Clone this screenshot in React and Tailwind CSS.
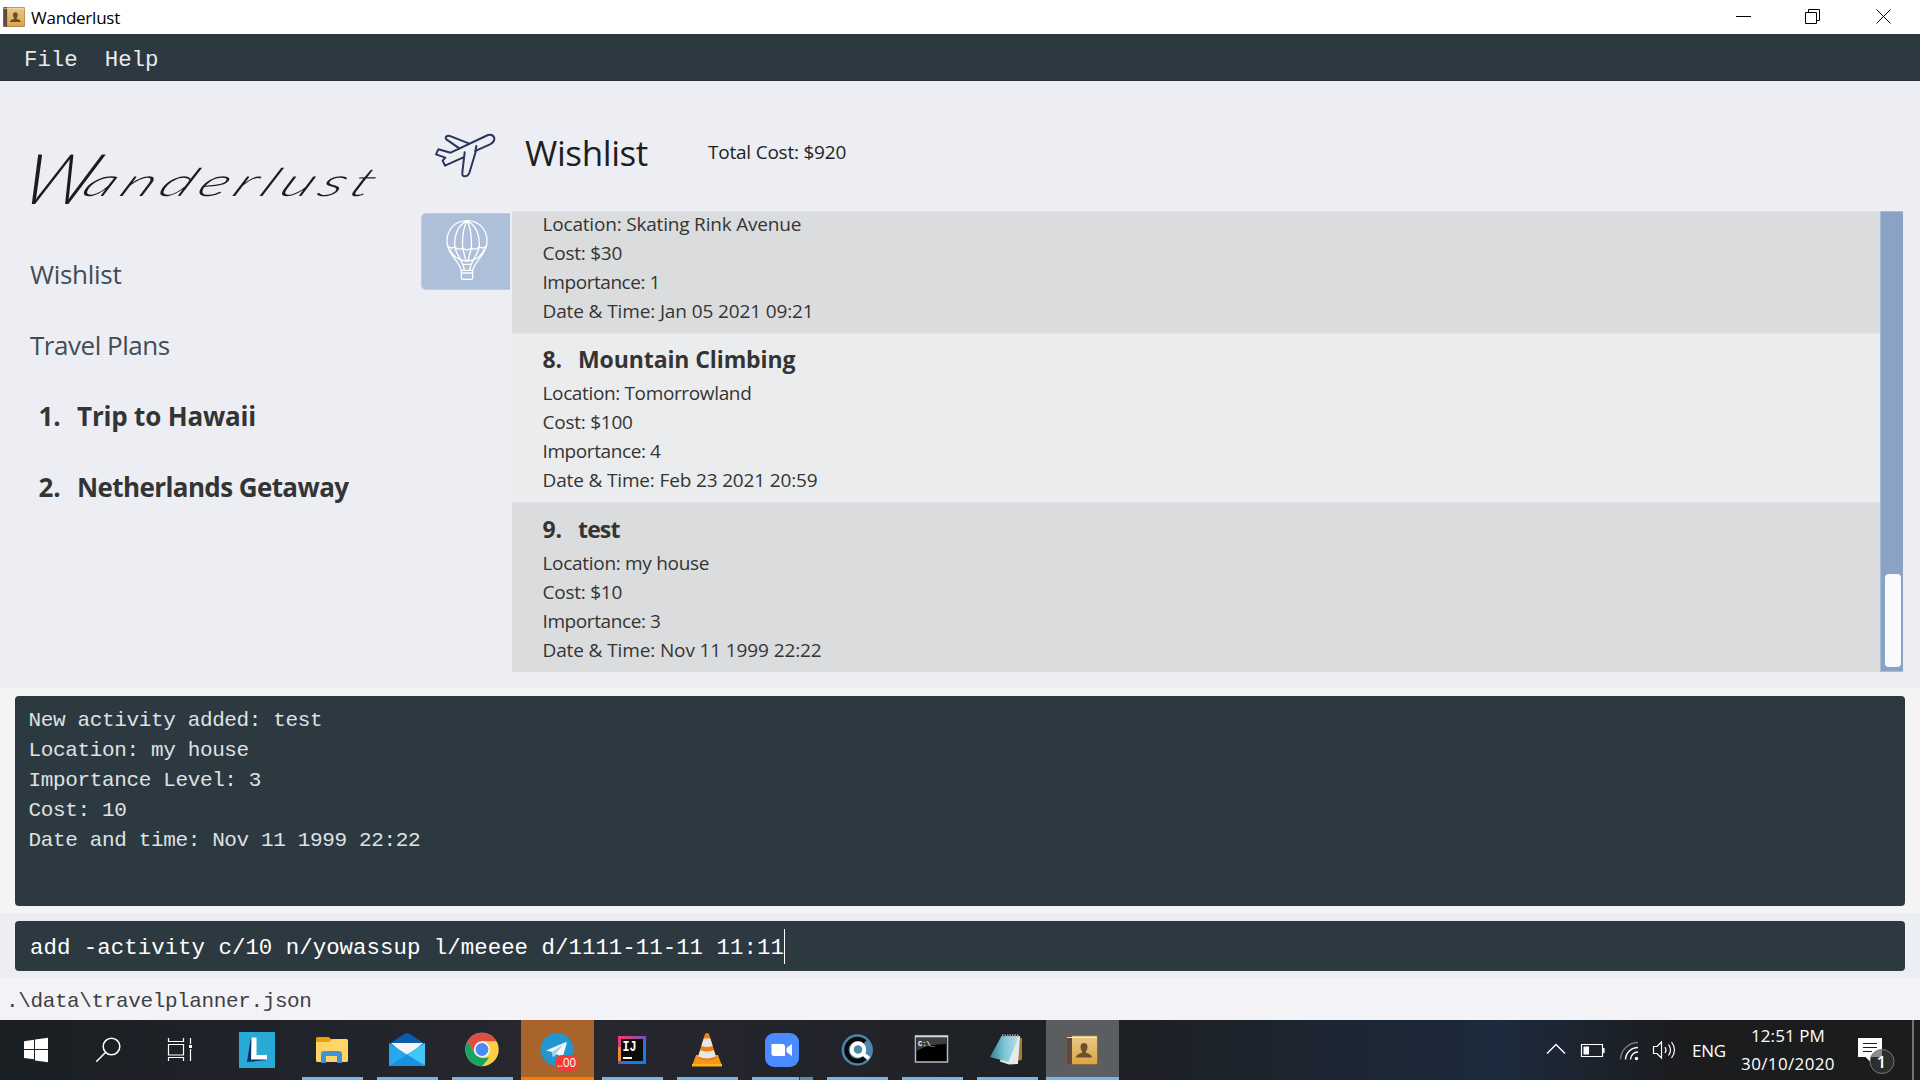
import React from "react";

const sans = "font-['Open_Sans',sans-serif]";
const mono = "font-['Liberation_Mono',monospace]";

function Book({ x, y, w, h }) {
  return (
    <svg x={x} y={y} width={w} height={h} viewBox="0 0 32 30" preserveAspectRatio="none">
      <defs>
        <linearGradient id="cover" x1="0" y1="0" x2="0" y2="1">
          <stop offset="0" stopColor="#e9c98c" />
          <stop offset="1" stopColor="#dba544" />
        </linearGradient>
      </defs>
      <rect x="0.5" y="0.5" width="31" height="29" rx="1.5" fill="url(#cover)" stroke="#8a6a3a" />
      <rect x="0.5" y="0.5" width="5.5" height="29" rx="1" fill="#5d4a45" />
      <path d="M1 2.5h30" stroke="#f6e3bd" strokeWidth="1" />
      <path d="M18 8c2.300 0 3.500 1.600 3.500 4 0 2-.8 3.300-1.600 4.200v1.600c2 .8 5.600 1.400 6.100 4.700H10c.5-3.300 4.100-3.900 6.100-4.700v-1.600c-.8-.9-1.600-2.200-1.600-4.200 0-2.400 1.200-4 3.500-4z" fill="#6b5130" />
    </svg>
  );
}

function TitleBar() {
  return (
    <header className="flex h-[34px] shrink-0 items-center bg-white pl-[3px] text-black">
      <svg width="22" height="22" viewBox="0 0 22 22"><Book x="0" y="1" w="22" h="20" /></svg>
      <span className={`ml-[6px] pt-[2px] text-[17px] leading-[34px] tracking-[-0.23px] ${sans}`}>Wanderlust</span>
      <svg className="mr-[29px] ml-auto" width="155" height="34" viewBox="1736 0 155 34" fill="none" stroke="#000" strokeWidth="1">
        <path d="M1736 16.500h15M1805.500 12.500h11v11h-11zM1808.500 12.500v-3h11v11h-3" />
        <path d="M1876.500 9.500l14 14M1890.500 9.500l-14 14" />
      </svg>
    </header>
  );
}

function MenuBar() {
  return (
    <nav className={`flex h-[47px] shrink-0 gap-[27px] overflow-hidden border-b border-[#27313c] bg-[#2d3941] pl-[24px] text-[22.400px] leading-[52px] text-[#e9ebec] ${mono}`}>
      <span>File</span>
      <span>Help</span>
    </nav>
  );
}

const plans = [
  { n: "1.", name: "Trip to Hawaii", cls: "tracking-[-0.18px]" },
  { n: "2.", name: "Netherlands Getaway", cls: "tracking-[-0.6px]" },
];

function Sidebar() {
  return (
    <aside className={`flex w-[421px] shrink-0 flex-col pl-[30px] text-[26px] leading-[71px] text-[#414c56] ${sans}`}>
      <h1 className="flex h-[158px] items-baseline pt-[43px] font-['Lato',sans-serif] leading-[90px] font-light text-[#1b1c1e] italic">
        <span className="relative top-[8px] -ml-[18px] w-[76px] origin-bottom-left scale-x-[1.080] -skew-x-[16deg] text-[70px]">W</span>
        <span className="origin-left scale-x-[1.580] -skew-x-[20deg] text-[39px] tracking-[4.300px]">anderlust</span>
      </h1>
      <div className="tracking-[-0.28px]">Wishlist</div>
      <div className="tracking-[-0.47px]">Travel Plans</div>
      {plans.map((p) => (
        <div key={p.n} className="flex font-bold text-[#343434]">
          <span className="w-[47px] pl-[8.500px] tracking-[-0.2px]">{p.n}</span>
          <span className={p.cls}>{p.name}</span>
        </div>
      ))}
    </aside>
  );
}

function Plane() {
  return (
    <svg className="relative top-[1.500px]" width="70" height="50" viewBox="60 90 210 150" fill="none" stroke="#27375c" strokeWidth="6" strokeLinejoin="round" strokeLinecap="round">
      <path d="M164 157L157 218Q156 229 164 229Q174 229 178 219L198 152L240 133Q254 126 253 114Q249 101 234 105L122 158L85 148L78 163L106 173L98 182L105 197L160 172" />
      <path d="M148 145L109 118Q104 111 112 108Q117 106 123 109L176 130M199 138L196 154" />
    </svg>
  );
}

function Balloon() {
  return (
    <svg className="mb-[3px] ml-[22px]" width="46" height="64" viewBox="102 355 138 192" fill="none" stroke="#fff" strokeWidth="4" strokeLinejoin="round" strokeLinecap="round">
      <path d="M171 363C134 363 111 390 111 424C111 462 146 482 154 512H188C196 482 231 462 231 424C231 390 208 363 171 363Z" />
      <path d="M171 363C146 376 133 402 134 440C136 460 158 482 163 510M171 363C196 376 209 402 208 440C206 460 184 482 179 510M171 363C160 385 156 410 158 445L168 484M171 363C182 385 186 410 184 445L174 484" />
      <path d="M112 438Q124 450 134 441Q146 453 158 445Q171 456 184 445Q196 453 208 441Q218 450 230 438M119 450Q135 482 171 484Q207 482 223 450M158 494H184M155 520H187M154 512V534Q154 539 159 539H183Q188 539 188 534V512" />
    </svg>
  );
}

const activities = [
  {
    n: null, shade: "h-[122px] bg-[#dbdcde]",
    lines: [
      ["Location: Skating Rink Avenue", "tracking-[-0.19px]"],
      ["Cost: $30", "tracking-[-0.25px]"],
      ["Importance: 1", "tracking-[-0.45px]"],
      ["Date & Time: Jan 05 2021 09:21", "tracking-[-0.12px]"],
    ],
  },
  {
    n: "8.", name: "Mountain Climbing", title: "tracking-[-0.1px]", shade: "h-[169px] bg-[#ebecee]",
    lines: [
      ["Location: Tomorrowland", "tracking-[-0.36px]"],
      ["Cost: $100", "tracking-[-0.25px]"],
      ["Importance: 4", "tracking-[-0.4px]"],
      ["Date & Time: Feb 23 2021 20:59", "tracking-[-0.15px]"],
    ],
  },
  {
    n: "9.", name: "test", title: "tracking-[-0.85px]", shade: "h-[170px] bg-[#dbdcde]",
    lines: [
      ["Location: my house", "tracking-[-0.3px]"],
      ["Cost: $10", "tracking-[-0.25px]"],
      ["Importance: 3", "tracking-[-0.4px]"],
      ["Date & Time: Nov 11 1999 22:22", "tracking-[-0.12px]"],
    ],
  },
];

function Activity({ item }) {
  return (
    <li className={`flex shrink-0 flex-col justify-end border-t border-[#e3e4e8] pb-[7px] pl-[30.500px] ${item.shade}`}>
      {item.n && (
        <h3 className="mb-[3px] flex text-[23px] leading-[33px] font-bold">
          <span className="w-[35.500px] tracking-[-0.1px]">{item.n}</span>
          <span className={item.title}>{item.name}</span>
        </h3>
      )}
      {item.lines.map(([text, cls]) => (
        <p key={text} className={`h-[29px] shrink-0 text-[19px] leading-[29px] ${cls}`}>{text}</p>
      ))}
    </li>
  );
}

function Content() {
  return (
    <main className={`flex flex-1 flex-col pr-[17px] text-[#343434] ${sans}`}>
      <div className="flex h-[130px] items-center pt-[14px] pl-[9px] text-[#1d1f20]">
        <Plane />
        <h2 className="ml-[25px] w-[183px] text-[35px] leading-[60px] tracking-[-0.4px]">Wishlist</h2>
        <span className="pb-[2px] text-[19px] leading-[60px] tracking-[-0.22px]">Total Cost: $920</span>
      </div>
      <div className="flex h-[461px]">
        <div className="mt-[2px] flex h-[77px] w-[89px] items-center rounded-l-[5px] border border-r-0 border-[#bccbe0] bg-[#aebfd9]">
          <Balloon />
        </div>
        <ul className="ml-[2px] flex flex-1 flex-col overflow-hidden">
          {activities.map((a) => <Activity key={a.lines[3][0]} item={a} />)}
        </ul>
        <div className="flex w-[23px] flex-col justify-end border-y border-l border-[#a9bad5] bg-[#8aa2c3] pr-[2px] pb-[4px] pl-[4px]">
          <div className="h-[93px] rounded-[4px] bg-[#fafafc]" />
        </div>
      </div>
    </main>
  );
}

const output = [
  "New activity added: test",
  "Location: my house",
  "Importance Level: 3",
  "Cost: 10",
  "Date and time: Nov 11 1999 22:22",
];

function Console() {
  return (
    <section className={mono}>
      <div className="h-[225px] bg-[#f4f4f4] px-[15px] pt-[8px]">
        <div className="h-[210px] rounded-[4px] bg-[#2d3941] pt-[10px] pl-[13.500px] text-[21px] leading-[30px] tracking-[-0.36px] text-[#dfe1e3]">
          {output.map((l) => <p key={l}>{l}</p>)}
        </div>
      </div>
      <div className="h-[65px] bg-[#edeef4] px-[15px] pt-[8px]">
        <div className="flex h-[50px] items-center rounded-[4px] bg-[#2d3941] pl-[15px] text-[22.400px] leading-[50px] text-white">
          <span className="pt-[3px] tracking-[0.025px] whitespace-pre">add -activity c/10 n/yowassup l/meeee d/1111-11-11 11:11</span>
          <span className="h-[35px] w-[1.500px] bg-white" />
        </div>
      </div>
      <div className="h-[42px] bg-[#f3f2f7] pl-[6px] text-[21px] leading-[48px] tracking-[-0.38px] text-[#3f4043]">.\data\travelplanner.json</div>
    </section>
  );
}

const line = "bg-[#76b5ea]";
const apps = [
  {
    x: 221, key: "l",
    art: <>
      <rect x="239" y="1032" width="36" height="36" fill="#27abd6" />
      <path d="M251 1037l-4 25 21-2-14-3z" fill="#0b2f66" />
      <path d="M251.500 1037.500h5v17.500h10.500v4.500h-16z" fill="#fff" />
    </>,
  },
  {
    x: 296, key: "files", bar: line,
    art: <>
      <path d="M316 1038.500q0-1.500 1.500-1.500h11l4 3v6h-16.500z" fill="#e6a109" />
      <path d="M316 1042h13l3-3h14.500q1.500 0 1.500 1.500v20q0 1.500-1.500 1.500h-29q-1.500 0-1.500-1.500z" fill="#ffd567" />
      <path d="M321 1063v-9q0-3 3-3h15q3 0 3 3v9h-5v-7h-11v7z" fill="#3e93d8" />
    </>,
  },
  {
    x: 371, key: "mail", bar: line,
    art: <>
      <path d="M389 1044l16-10.500q2-1.200 4 0l16 10.500-18 14z" fill="#0a5cad" />
      <path d="M391 1043h32l-16 14z" fill="#f4f4f4" />
      <path d="M389 1043l18 11.500 18-11.500v22q0 1-1 1h-34q-1 0-1-1z" fill="#27a8ee" />
      <path d="M425 1043v22l-18-10.500z" fill="#42c8f5" />
      <path d="M389 1066l18-11.500 17 11.500z" fill="#1b8fe2" />
    </>,
  },
  {
    x: 446, key: "chrome", bar: line,
    art: <>
      <circle cx="482" cy="1049.500" r="16.700" fill="#fdcf42" />
      <path d="M482 1032.800a16.700 16.700 0 0 1 14.500 8.400h-14.500l-7.200 12.500-7.300-12.500a16.700 16.700 0 0 1 14.500-8.400z" fill="#dd4f43" />
      <path d="M467.500 1041.200l7.300 12.500 7.200 4.100h7.200l-7.200 8.400a16.700 16.700 0 0 1-14.500-25z" fill="#1ba261" />
      <circle cx="482" cy="1049.500" r="8.200" fill="#f3f3f3" />
      <circle cx="482" cy="1049.500" r="6.400" fill="#4b8af5" />
    </>,
  },
  {
    x: 521, key: "telegram", bar: "bg-[#ff7b00]", full: true, bg: "bg-[#a9642c]",
    art: <>
      <circle cx="557" cy="1049.500" r="16.500" fill="#2196cf" />
      <path d="M546 1050.500l20-8.500q1 0 .5 2l-4 14-6-4-3.500 3-1-5z" fill="#f2f7fa" />
      <path d="M552 1052l12-8-9 10-2 3z" fill="#a9cbe0" />
      <rect x="555.500" y="1055" width="22.500" height="16" rx="6" fill="#f23c34" />
      <text x="557" y="1067" fontSize="12" fill="#fff" textLength="19" lengthAdjust="spacingAndGlyphs" fontFamily="Open Sans">..00</text>
    </>,
  },
  {
    x: 596, key: "idea", bar: line,
    art: <>
      <defs>
        <linearGradient id="ij" x1="0" y1="0" x2="1" y2="1">
          <stop offset="0.1" stopColor="#f4366c" />
          <stop offset="0.5" stopColor="#6b57b8" />
          <stop offset="0.75" stopColor="#0d7ff2" />
        </linearGradient>
      </defs>
      <rect x="618" y="1036" width="28" height="28" fill="url(#ij)" />
      <path d="M618 1047h3v14h-3z" fill="#ee8a3c" />
      <rect x="621" y="1039" width="22" height="22" fill="#0b0b0b" />
      <text x="622.500" y="1051" fontSize="14" fontWeight="700" fill="#fff" textLength="14" lengthAdjust="spacingAndGlyphs" fontFamily="Liberation Mono">IJ</text>
      <path d="M623 1057h9v2h-9z" fill="#fff" />
    </>,
  },
  {
    x: 671, key: "vlc", bar: line,
    art: <>
      <path d="M696 1055h22l4 11h-30z" fill="#f79420" />
      <path d="M692 1064h30v2.500h-30z" fill="#fdb515" />
      <path d="M705 1034q2-2 4 0l7.500 24q-9.500 5-19 0z" fill="#f07d0c" />
      <path d="M703.700 1038.500h6.600l2.400 7.500q-5.700 2-11.400 0z" fill="#e4e6e8" />
      <path d="M700.200 1050q6.800 3 13.600 0l2 6.500q-8.800 4-17.600 0z" fill="#e4e6e8" />
    </>,
  },
  {
    x: 746, key: "zoom", bar: line, split: true,
    art: <>
      <rect x="765" y="1033" width="34" height="34" rx="9" fill="#4a8cff" />
      <path d="M771.500 1044h11q2.500 0 2.500 2.500v9.500h-11q-2.500 0-2.500-2.500zM786.500 1048l5.500-4v12l-5.500-4z" fill="#fff" />
    </>,
  },
  {
    x: 821, key: "search", bar: line,
    art: <>
      <circle cx="857.300" cy="1050" r="15.700" fill="#4c87ab" />
      <path d="M865 1042a11 11 0 1 0 0 16" fill="none" stroke="#0a0a0a" strokeWidth="4.500" />
      <circle cx="858" cy="1049.500" r="6.300" fill="#4c87ab" stroke="#fff" strokeWidth="4" />
      <path d="M862.500 1053.500l6.500 5" stroke="#fff" strokeWidth="4" />
    </>,
  },
  {
    x: 896, key: "cmd", bar: line,
    art: <>
      <rect x="915.500" y="1036" width="32" height="26" fill="#000" stroke="#b5bac0" strokeWidth="1.500" />
      <path d="M915 1036.500h33" stroke="#cdd2d8" strokeWidth="2" />
      <path d="M917 1051q10-7 29-7v-6h-29z" fill="#3c3e40" />
      <text x="918" y="1045.500" fontSize="7" fontWeight="700" fill="#fff" fontFamily="Liberation Mono">C:\_</text>
    </>,
  },
  {
    x: 971, key: "notepad", bar: line,
    art: <>
      <defs>
        <linearGradient id="pad" x1="0" y1="0" x2="1" y2="0">
          <stop offset="0" stopColor="#2f8396" />
          <stop offset="0.5" stopColor="#7cc6d4" />
          <stop offset="1" stopColor="#b3e0e8" />
        </linearGradient>
      </defs>
      <path d="M1016 1037l6 1v22l-7 1z" fill="#a87a30" />
      <path d="M1005 1036h15l-2 28-9 .5-9-3z" fill="#e3ebed" />
      <path d="M1001.500 1036l17 1-10 25-18.500-5z" fill="url(#pad)" />
      <path d="M1002 1035.500h17" stroke="#8d9496" strokeWidth="2.500" strokeDasharray="1.500 1" />
    </>,
  },
  { x: 1046, key: "book", bar: line, full: true, bg: "bg-[#5b5e61]", art: <Book x="1066" y="1035" w="32" h="30" /> },
];

function AppButton({ app }) {
  return (
    <div className={`flex h-[60px] w-[73px] flex-col items-center ${app.bg || ""}`}>
      <svg width="73" height="57" viewBox={`${app.x} 1020 73 57`}>{app.art}</svg>
      {app.bar && (
        <div className={`flex h-[3px] justify-end ${app.full ? "w-[73px]" : "w-[61px]"} ${app.bar}`}>
          {app.split && <span className="w-[14px] border-l border-[#33485c] bg-[#5a8ab3]" />}
        </div>
      )}
    </div>
  );
}

function Taskbar() {
  return (
    <footer className={`flex h-[60px] shrink-0 bg-linear-to-r from-[#1b2025] via-[#1c1f24] to-[#1b1c1e] text-white ${sans}`}>
      <div className="flex w-[1120px] bg-linear-to-r from-[#1a1f23] via-[#272730] via-50% to-[#1d2024]">
        <svg width="72" height="60" viewBox="0 1020 72 60" fill="#fff">
          <path d="M24 1041.200l10-1.400v9.200h-10zM35 1039.600l13-1.800v11.200h-13zM24 1050h10v9.300l-10-1.400zM35 1050h13v12.200l-13-1.800z" />
        </svg>
        <svg width="72" height="60" viewBox="72 1020 72 60" fill="none" stroke="#fff" strokeWidth="1.500">
          <circle cx="111.500" cy="1046.500" r="8.300" /><path d="M105.500 1052.500l-9.300 9.300" />
        </svg>
        <svg width="77" height="60" viewBox="144 1020 77 60" fill="none" stroke="#fff" strokeWidth="1.200">
          <path d="M168.500 1044.500h15v10.500h-15zM168.500 1038v3.500h15v-3.500M168.500 1061v-3.500h15v3.500M190.500 1038v6M190.500 1049v12" />
          <path d="M189 1045h3v3h-3z" fill="#fff" stroke="none" />
        </svg>
        <div className="flex gap-[2px]">{apps.map((a) => <AppButton key={a.key} app={a} />)}</div>
      </div>
      <div className="flex flex-1 items-center justify-end bg-linear-to-r from-[#1d2024] via-[#1c2a3d] via-48% to-[#1b1c1e] to-70%">
        <svg width="147" height="60" viewBox="1546 1020 147 60" fill="none" stroke="#fff" strokeWidth="1.400">
          <path d="M1547 1053.500l9-9 9 9" />
          <path d="M1581.500 1044.500h21v12h-21zM1603 1048.500h1v4h-1z" strokeWidth="1.200" />
          <path d="M1583.500 1046.500h5.500v8h-5.500z" fill="#fff" stroke="none" />
          <path d="M1620.500 1059.500a17.500 17.500 0 0 1 17.500-17" stroke="#77797c" />
          <path d="M1625.500 1059.500a12.500 12.500 0 0 1 12.500-12M1630.500 1059.500a7.500 7.500 0 0 1 7.500-7.500" />
          <circle cx="1636.500" cy="1058.500" r="1.700" fill="#fff" stroke="none" />
          <path d="M1653.500 1046.500h3.500l4.500-4.500v16l-4.500-4.500h-3.500zM1665 1047q2 3 0 6M1668.500 1044.500q4 5.500 0 11M1671.500 1042q6 8 0 16" strokeWidth="1.200" />
        </svg>
        <span className="-ml-px w-[49px] pt-[1px] text-[17px] tracking-[-0.3px]">ENG</span>
        <div className="flex w-[94px] flex-col items-center text-[17px] leading-[28px]">
          <span className="tracking-[0.09px]">12:51 PM</span>
          <span className="tracking-[0.36px]">30/10/2020</span>
        </div>
        <svg width="77" height="60" viewBox="1835 1020 77 60">
          <path d="M1858 1038h24v19h-10.500v6l-6-6h-7.500z" fill="#fff" />
          <path d="M1863 1043.500h14M1863 1047.500h14M1863 1051.500h9" stroke="#1c1e21" strokeWidth="1.200" />
          <circle cx="1882" cy="1061.500" r="12" fill="#2b2d2f" stroke="#77797b" />
          <path d="M1871 1057a12 12 0 0 1 11-7.500v7.500z" fill="#8a8b8c" />
          <text x="1876.500" y="1067.500" fontSize="17" fontWeight="600" fill="#fff" fontFamily="Open Sans">1</text>
        </svg>
        <div className="mr-[6px] h-[60px] w-[2px] bg-[#717274]" />
      </div>
    </footer>
  );
}

export default function App() {
  return (
    <div className="flex h-[1080px] w-[1920px] flex-col overflow-hidden bg-[#edeef4]">
      <TitleBar />
      <MenuBar />
      <div className="flex h-[607px] shrink-0">
        <Sidebar />
        <Content />
      </div>
      <Console />
      <Taskbar />
    </div>
  );
}
